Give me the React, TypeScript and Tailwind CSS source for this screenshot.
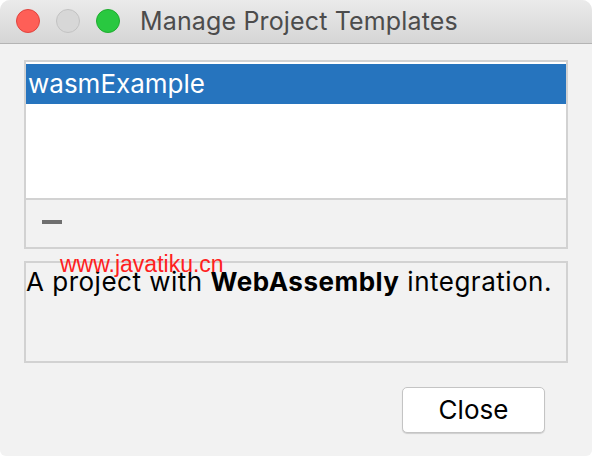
import React from "react";

export default function App() {
  return (
    <div className="w-[592px] h-[456px] bg-white relative" style={{ fontFamily: "Inter, 'Noto Sans', sans-serif" }}>
      <div className="w-full h-full bg-[#f2f2f2] rounded-t-[10px] rounded-b-[6px] overflow-hidden flex flex-col">
        <div className="h-[44px] shrink-0 flex items-center bg-gradient-to-b from-[#ebebeb] to-[#d5d5d5] border-b border-[#b4b4b4]">
          <div className="flex items-center gap-[16px] pl-[16px] mt-[-1px]">
            <div className="w-[24px] h-[24px] rounded-full bg-[#fe5f57] border border-[#e0443e]" />
            <div className="w-[24px] h-[24px] rounded-full bg-[#d7d7d7] border border-[#c2c2c2]" />
            <div className="w-[24px] h-[24px] rounded-full bg-[#29c840] border border-[#1fac2f]" />
          </div>
          <div className="ml-[20px] text-[25px] text-[#4c4c4c] leading-none tracking-[0.15px]">Manage Project Templates</div>
        </div>
        <div className="px-[24px] pt-[16px] flex flex-col">
          <div className="w-[544px] h-[189px] border-2 border-[#d2d2d2] flex flex-col">
            <div className="bg-white pt-[2px] h-[136px]">
              <div className="h-[40px] bg-[#2674be] text-white text-[26px] flex items-center pl-[2px] leading-none">wasmExample</div>
            </div>
            <div className="flex-1 border-t-2 border-[#d2d2d2] flex items-center pl-[16px]">
              <div className="w-[20px] h-[4px] bg-[#6f6f6f] mt-[-3px]" />
            </div>
          </div>
          <div className="mt-[12px] w-[544px] h-[102px] border-2 border-[#d2d2d2] pl-[0px] pt-[2px]">
            <div className="text-[26px] leading-[34px] text-black whitespace-nowrap tracking-[0.5px]">
              A project with <span className="font-bold">WebAssembly</span> integration.
            </div>
          </div>
          <div className="flex justify-end pr-[23px] mt-[24px]">
            <button className="w-[143px] h-[46px] bg-white rounded-[5px] border border-[#c4c4c4] shadow-[0_1px_1px_rgba(0,0,0,0.15)] text-[26px] text-black leading-none">Close</button>
          </div>
        </div>
      </div>
      <div className="absolute left-[60px] top-[253px] text-[23px] text-[#ff2020] leading-none" style={{ fontFamily: "'Liberation Sans', Arial, sans-serif" }}>www.javatiku.cn</div>
    </div>
  );
}
